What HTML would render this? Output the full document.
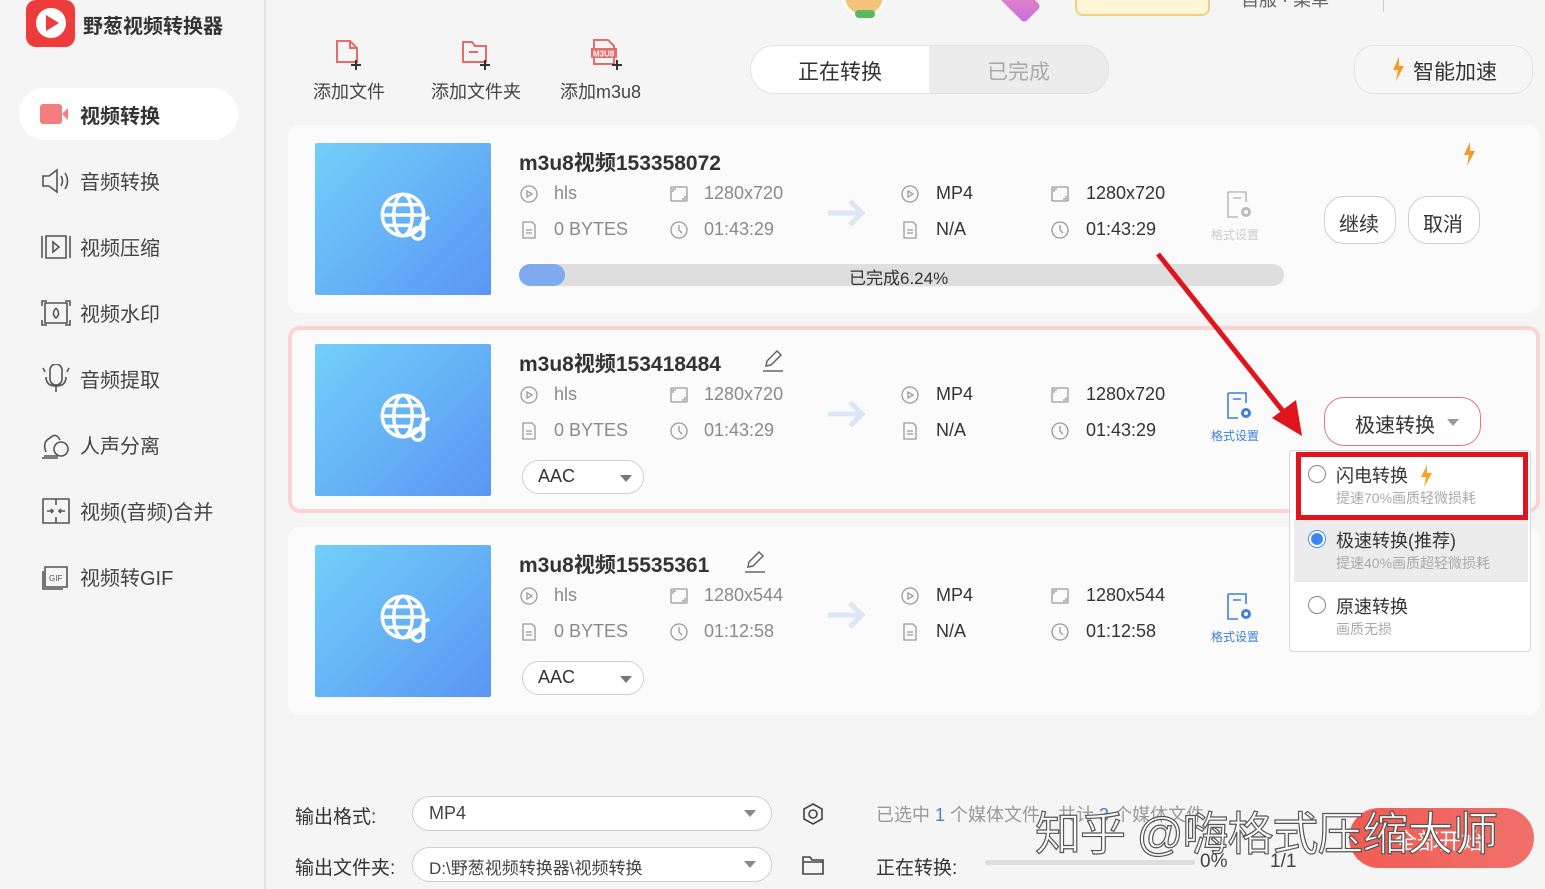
<!DOCTYPE html>
<html><head><meta charset="utf-8">
<style>
*{margin:0;padding:0;box-sizing:border-box}
body{width:1545px;height:889px;overflow:hidden;background:#f5f5f5;font-family:"Liberation Sans","Noto Sans CJK SC",sans-serif;color:#333;position:relative}
.a{position:absolute;white-space:nowrap}
.side{left:0;top:0;width:266px;height:889px;border-right:2px solid #e6e6e6}
.nav{left:80px;font-size:20px;color:#444}
.card{left:288px;width:1252px;height:188px;background:#fbfbfb;border-radius:12px}
.th{width:176px;height:152px;background:linear-gradient(135deg,#72cff9,#5a96f4);border-radius:2px}
.g{color:#8a8a8a;font-size:18px}
.k{color:#333;font-size:18px}
.ti{font-size:21px;font-weight:bold;color:#333}
.pill{border:1.5px solid #cfcfcf;border-radius:20px;background:#fff}
.fs{font-size:12px;color:#3d7fe0;text-align:center}
</style></head><body>

<div class="a" style="left:842px;top:-26px;width:44px;height:44px;border-radius:50%;background:#f5c47a;border:3px solid #fff"></div>
<div class="a" style="left:855px;top:10px;width:20px;height:8px;background:#5cb85c;border-radius:4px"></div>
<div class="a" style="left:1002px;top:-10px;width:36px;height:24px;background:linear-gradient(135deg,#f08fb0,#c86ee6);border-radius:4px;transform:rotate(45deg)"></div>
<div class="a" style="left:1075px;top:-20px;width:135px;height:36px;background:#fff6d8;border:2px solid #f0d080;border-radius:8px"></div>
<div class="a" style="left:1241px;top:-14px;font-size:18px;color:#666">自服 · 菜单</div>
<div class="a" style="left:1383px;top:0;width:1px;height:12px;background:#ccc"></div>

<div class="a side"></div>
<div class="a" style="left:26px;top:0;width:49px;height:47px;background:#ee3b3b;border-radius:10px"></div>
<div class="a" style="left:36px;top:8px;width:30px;height:30px;border-radius:50%;background:#fff"></div>
<div class="a" style="left:46px;top:15px;width:0;height:0;border-left:13px solid #ee3b3b;border-top:8px solid transparent;border-bottom:8px solid transparent"></div>
<div class="a" style="left:83px;top:10px;font-size:20px;font-weight:bold;color:#333">野葱视频转换器</div>
<div class="a" style="left:19px;top:88px;width:219px;height:52px;background:#fff;border-radius:26px"></div>
<div class="a" style="left:40px;top:104px;width:22px;height:20px;background:#f47e7e;border-radius:3px"></div>
<div class="a" style="left:62px;top:108px;width:0;height:0;border-right:6px solid #f47e7e;border-top:6px solid transparent;border-bottom:6px solid transparent"></div>
<div class="a nav" style="top:100px;font-weight:bold;color:#333">视频转换</div>
<div class="a nav" style="top:166px">音频转换</div>
<div class="a nav" style="top:232px">视频压缩</div>
<div class="a nav" style="top:298px">视频水印</div>
<div class="a nav" style="top:364px">音频提取</div>
<div class="a nav" style="top:430px">人声分离</div>
<div class="a nav" style="top:496px">视频(音频)合并</div>
<div class="a nav" style="top:562px">视频转GIF</div>
<svg class="a" style="left:40px;top:166px" width="32" height="30" fill="none" stroke="#555" stroke-width="1.6"><path d="M3 10h6l8-6v22l-8-6H3z M21 10q3 5 0 10 M25 7q5 8 0 16"/></svg>
<svg class="a" style="left:40px;top:232px" width="32" height="30" fill="none" stroke="#555" stroke-width="1.6"><path d="M2 4v22 M6 4h20v22H6z M13 10l6 5-6 5z M30 4v22"/></svg>
<svg class="a" style="left:40px;top:298px" width="32" height="30" fill="none" stroke="#555" stroke-width="1.6"><path d="M2 8V3h5 M25 3h5v5 M30 22v5h-5 M7 27H2v-5 M5 5h22v20H5z M16 10q-5 6 0 10q5-4 0-10"/></svg>
<svg class="a" style="left:40px;top:364px" width="32" height="30" fill="none" stroke="#555" stroke-width="1.6"><path d="M10 6a6 6 0 0 1 12 0v9a6 6 0 0 1-12 0z M6 13q0 9 10 9q10 0 10-9 M16 22v6 M3 4l2 4 M29 4l-2 4"/></svg>
<svg class="a" style="left:40px;top:430px" width="32" height="30" fill="none" stroke="#555" stroke-width="1.6"><path d="M4 26h14 M6 22q-4-10 4-14q6-6 10 2 M2 28h16"/><circle cx="21" cy="19" r="7"/></svg>
<svg class="a" style="left:40px;top:496px" width="32" height="30" fill="none" stroke="#555" stroke-width="1.6"><path d="M3 3h26v24H3z M16 3v6 M16 21v6 M7 15h6 M19 15h6 M11 13l2 2-2 2 M21 13l-2 2 2 2"/></svg>
<svg class="a" style="left:40px;top:562px" width="32" height="30" fill="none" stroke="#555" stroke-width="1.6"><path d="M5 5h22v20H5z M3 9v18h20"/><text x="9" y="19" font-size="8" fill="#555" stroke="none" font-family="Liberation Sans">GIF</text></svg>

<svg class="a" style="left:334px;top:38px" width="32" height="36" fill="none" stroke="#ea6a6a" stroke-width="2"><path d="M3 3h13l7 7v14H3z M16 3v7h7"/><path d="M22 22v10 M17 27h10" stroke="#333"/></svg>
<svg class="a" style="left:460px;top:38px" width="34" height="36" fill="none" stroke="#ea6a6a" stroke-width="2"><path d="M3 4h9l3 4h11v16H3z M9 14h9"/><path d="M25 22v10 M20 27h10" stroke="#333"/></svg>
<svg class="a" style="left:590px;top:36px" width="34" height="38" fill="none" stroke="#ea6a6a" stroke-width="2"><path d="M4 4h14l6 6v18H4z"/><rect x="1" y="12" width="26" height="10" fill="#ea6a6a" stroke="none"/><text x="3" y="20.5" font-size="8" fill="#fff" stroke="none" font-weight="bold" font-family="Liberation Sans">M3U8</text><path d="M27 24v10 M22 29h10" stroke="#333"/></svg>
<div class="a" style="left:313px;top:78px;font-size:18px;color:#444">添加文件</div>
<div class="a" style="left:431px;top:78px;font-size:18px;color:#444">添加文件夹</div>
<div class="a" style="left:560px;top:78px;font-size:18px;color:#444">添加m3u8</div>

<div class="a" style="left:750px;top:45px;width:359px;height:49px;background:#ececec;border:1.5px solid #e2e2e2;border-radius:25px;overflow:hidden">
<div style="position:absolute;left:0;top:0;width:178px;height:49px;background:#fff"></div></div>
<div class="a" style="left:798px;top:56px;font-size:21px;color:#333">正在转换</div>
<div class="a" style="left:987px;top:56px;font-size:21px;color:#aaa">已完成</div>
<div class="a pill" style="left:1354px;top:45px;width:179px;height:49px;background:#f6f6f6;border-color:#e2e2e2"></div>
<svg class="a" style="left:1391px;top:57px" width="14" height="24"><path d="M8 0L2 13h5l-2 11 8-15H8z" fill="#f59a23"/></svg>
<div class="a" style="left:1413px;top:56px;font-size:21px;color:#333">智能加速</div>

<div class="a card" style="top:125px"></div>
<div class="a card" style="top:326px;height:187px;border:4px solid #fbd3d3;background:#fbfbfb"></div>
<div class="a card" style="top:527px"></div>

<div class="a th" style="left:315px;top:143px"></div>
<div class="a ti" style="left:519px;top:147px">m3u8视频153358072</div>
<div class="a" style="left:519px;top:264px;width:765px;height:22px;background:#dedede;border-radius:11px"></div>
<div class="a" style="left:519px;top:264px;width:46px;height:22px;background:#7faaf0;border-radius:11px"></div>
<div class="a" style="left:849px;top:264px;font-size:17px;color:#333">已完成6.24%</div>
<svg class="a" style="left:1462px;top:142px" width="14" height="24"><path d="M8 0L2 13h5l-2 11 8-15H8z" fill="#f59a23"/></svg>
<div class="a pill" style="left:1324px;top:196px;width:72px;height:48px"></div>
<div class="a" style="left:1339px;top:208px;font-size:20px;color:#333">继续</div>
<div class="a pill" style="left:1408px;top:196px;width:72px;height:48px"></div>
<div class="a" style="left:1423px;top:208px;font-size:20px;color:#333">取消</div>

<div class="a th" style="left:315px;top:344px"></div>
<div class="a ti" style="left:519px;top:348px">m3u8视频153418484</div>
<div class="a pill" style="left:522px;top:460px;width:122px;height:34px"></div>
<div class="a" style="left:538px;top:466px;font-size:18px;color:#333">AAC</div>
<div class="a" style="left:620px;top:475px;border-top:7px solid #777;border-left:6px solid transparent;border-right:6px solid transparent"></div>
<div class="a pill" style="left:1324px;top:397px;width:157px;height:49px;border-color:#e07a7a"></div>
<div class="a" style="left:1355px;top:409px;font-size:20px;color:#333">极速转换</div>
<div class="a" style="left:1447px;top:419px;border-top:7px solid #999;border-left:6px solid transparent;border-right:6px solid transparent"></div>

<div class="a th" style="left:315px;top:545px"></div>
<div class="a ti" style="left:519px;top:549px">m3u8视频15535361</div>
<div class="a pill" style="left:522px;top:661px;width:122px;height:34px"></div>
<div class="a" style="left:538px;top:667px;font-size:18px;color:#333">AAC</div>
<div class="a" style="left:620px;top:676px;border-top:7px solid #777;border-left:6px solid transparent;border-right:6px solid transparent"></div>

<svg class="a" style="left:762px;top:349px" width="22" height="24" fill="none" stroke="#666" stroke-width="1.5"><path d="M4 17l1-5L15 2l4 4L9 16z M1 22h20"/></svg>
<svg class="a" style="left:744px;top:550px" width="22" height="24" fill="none" stroke="#666" stroke-width="1.5"><path d="M4 17l1-5L15 2l4 4L9 16z M1 22h20"/></svg>

<div class="a g" style="left:554px;top:183px">hls</div>
<div class="a g" style="left:704px;top:183px">1280x720</div>
<div class="a k" style="left:936px;top:183px">MP4</div>
<div class="a k" style="left:1086px;top:183px">1280x720</div>
<div class="a g" style="left:554px;top:219px">0 BYTES</div>
<div class="a g" style="left:704px;top:219px">01:43:29</div>
<div class="a k" style="left:936px;top:219px">N/A</div>
<div class="a k" style="left:1086px;top:219px">01:43:29</div>
<div class="a g" style="left:554px;top:384px">hls</div>
<div class="a g" style="left:704px;top:384px">1280x720</div>
<div class="a k" style="left:936px;top:384px">MP4</div>
<div class="a k" style="left:1086px;top:384px">1280x720</div>
<div class="a g" style="left:554px;top:420px">0 BYTES</div>
<div class="a g" style="left:704px;top:420px">01:43:29</div>
<div class="a k" style="left:936px;top:420px">N/A</div>
<div class="a k" style="left:1086px;top:420px">01:43:29</div>
<div class="a g" style="left:554px;top:585px">hls</div>
<div class="a g" style="left:704px;top:585px">1280x544</div>
<div class="a k" style="left:936px;top:585px">MP4</div>
<div class="a k" style="left:1086px;top:585px">1280x544</div>
<div class="a g" style="left:554px;top:621px">0 BYTES</div>
<div class="a g" style="left:704px;top:621px">01:12:58</div>
<div class="a k" style="left:936px;top:621px">N/A</div>
<div class="a k" style="left:1086px;top:621px">01:12:58</div>

<svg class="a" style="left:0;top:0" width="1545" height="889" fill="none" stroke="#999" stroke-width="1.3">
<defs>
<g id="disc"><circle cx="9" cy="9" r="8"/><path d="M7 6l5 3-5 3z"/></g>
<g id="res"><rect x="1" y="2" width="16" height="14" rx="1"/><path d="M3 7V4h3 M15 11v3h-3"/></g>
<g id="doc"><path d="M3 1h9l3 3v13H3z M6 9h6 M6 12h6"/></g>
<g id="clk"><circle cx="9" cy="9" r="8"/><path d="M9 4v5l3 3"/></g>
<g id="arr"><path d="M0 16h34 M22 4l12 12-12 12" stroke="#dde6f5" stroke-width="5"/></g>
<g id="globe" stroke="#fff" stroke-width="3"><circle cx="20" cy="20" r="18"/><ellipse cx="20" cy="20" rx="8" ry="18"/><path d="M2 20h36 M5 11h30 M5 29h22"/><circle cx="33" cy="36" r="5"/><path d="M38 36V24l5-2"/></g>
<g id="fmt"><path d="M2 2h18v10 M2 2v25h10 M7 8h8" stroke="#3d7fe0" stroke-width="1.6"/><circle cx="20" cy="22" r="5" fill="#3d7fe0" stroke="none"/><circle cx="20" cy="22" r="2" fill="#fff" stroke="none"/></g>
<g id="fmtg"><path d="M2 2h18v10 M2 2v25h10 M7 8h8" stroke="#bbb" stroke-width="1.6"/><circle cx="20" cy="22" r="5" fill="#bbb" stroke="none"/><circle cx="20" cy="22" r="2" fill="#fff" stroke="none"/></g>
</defs>
<use href="#disc" x="520" y="185"/><use href="#res" x="670" y="185"/><use href="#disc" x="901" y="185"/><use href="#res" x="1051" y="185"/>
<use href="#doc" x="520" y="221"/><use href="#clk" x="670" y="221"/><use href="#doc" x="901" y="221"/><use href="#clk" x="1051" y="221"/>
<use href="#disc" x="520" y="386"/><use href="#res" x="670" y="386"/><use href="#disc" x="901" y="386"/><use href="#res" x="1051" y="386"/>
<use href="#doc" x="520" y="422"/><use href="#clk" x="670" y="422"/><use href="#doc" x="901" y="422"/><use href="#clk" x="1051" y="422"/>
<use href="#disc" x="520" y="587"/><use href="#res" x="670" y="587"/><use href="#disc" x="901" y="587"/><use href="#res" x="1051" y="587"/>
<use href="#doc" x="520" y="623"/><use href="#clk" x="670" y="623"/><use href="#doc" x="901" y="623"/><use href="#clk" x="1051" y="623"/>
<use href="#arr" x="828" y="197"/><use href="#arr" x="828" y="398"/><use href="#arr" x="828" y="599"/>
<g transform="translate(380,192) scale(1.15)" stroke-width="2.6"><use href="#globe"/></g>
<g transform="translate(380,393) scale(1.15)"><use href="#globe"/></g>
<g transform="translate(380,594) scale(1.15)"><use href="#globe"/></g>
<use href="#fmtg" x="1226" y="190"/><use href="#fmt" x="1226" y="391"/><use href="#fmt" x="1226" y="592"/>
</svg>
<div class="a" style="left:1211px;top:226px;font-size:12px;color:#ccc">格式设置</div>
<div class="a fs" style="left:1211px;top:427px">格式设置</div>
<div class="a fs" style="left:1211px;top:628px">格式设置</div>

<div class="a" style="left:1289px;top:450px;width:242px;height:202px;background:#fff;border:1.5px solid #d8d8d8;border-radius:4px"></div>
<div class="a" style="left:1294px;top:519px;width:234px;height:63px;background:#ececec"></div>
<div class="a" style="left:1296px;top:452px;width:232px;height:68px;border:5px solid #e0141c"></div>
<div class="a" style="left:1308px;top:465px;width:18px;height:18px;border:1.5px solid #888;border-radius:50%"></div>
<div class="a" style="left:1336px;top:462px;font-size:18px;color:#333">闪电转换</div>
<svg class="a" style="left:1419px;top:465px" width="14" height="22"><path d="M8 0L2 12h5l-2 10 8-14H8z" fill="#f5a623"/></svg>
<div class="a" style="left:1336px;top:488px;font-size:14px;color:#aaa">提速70%画质轻微损耗</div>
<div class="a" style="left:1308px;top:530px;width:18px;height:18px;border:1.5px solid #4a8ff0;border-radius:50%;background:radial-gradient(#3d86f0 50%,#fff 55%)"></div>
<div class="a" style="left:1336px;top:527px;font-size:18px;color:#333">极速转换(推荐)</div>
<div class="a" style="left:1336px;top:553px;font-size:14px;color:#aaa">提速40%画质超轻微损耗</div>
<div class="a" style="left:1308px;top:596px;width:18px;height:18px;border:1.5px solid #888;border-radius:50%"></div>
<div class="a" style="left:1336px;top:593px;font-size:18px;color:#333">原速转换</div>
<div class="a" style="left:1336px;top:619px;font-size:14px;color:#aaa">画质无损</div>

<svg class="a" style="left:1140px;top:240px" width="180" height="210"><path d="M18 14L150 180" stroke="#e0141c" stroke-width="5"/><path d="M162 196L132 178L156 160z" fill="#e0141c"/></svg>

<div class="a" style="left:295px;top:802px;font-size:19px;color:#333">输出格式:</div>
<div class="a pill" style="left:412px;top:796px;width:360px;height:35px"></div>
<div class="a" style="left:429px;top:803px;font-size:18px;color:#444">MP4</div>
<div class="a" style="left:744px;top:810px;border-top:7px solid #888;border-left:6px solid transparent;border-right:6px solid transparent"></div>
<div class="a" style="left:295px;top:853px;font-size:19px;color:#333">输出文件夹:</div>
<div class="a pill" style="left:412px;top:847px;width:360px;height:35px"></div>
<div class="a" style="left:429px;top:854px;font-size:17px;color:#444">D:\野葱视频转换器\视频转换</div>
<div class="a" style="left:744px;top:861px;border-top:7px solid #888;border-left:6px solid transparent;border-right:6px solid transparent"></div>
<svg class="a" style="left:801px;top:802px" width="24" height="24" fill="none" stroke="#444" stroke-width="1.6"><path d="M12 2l9 5v10l-9 5-9-5V7z"/><circle cx="12" cy="12" r="4"/></svg>
<svg class="a" style="left:801px;top:854px" width="24" height="22" fill="none" stroke="#444" stroke-width="1.6"><path d="M2 3h7l2 3h11v14H2z M2 8h20"/></svg>
<div class="a" style="left:876px;top:801px;font-size:18px;color:#999">已选中 <span style="color:#3d7fe0">1</span> 个媒体文件，共计 <span style="color:#3d7fe0">3</span> 个媒体文件</div>
<div class="a" style="left:876px;top:853px;font-size:19px;color:#333">正在转换:</div>
<div class="a" style="left:985px;top:860px;width:210px;height:5px;background:#ddd;border-radius:3px"></div>
<div class="a" style="left:1200px;top:851px;font-size:19px;color:#444">0%</div>
<div class="a" style="left:1270px;top:851px;font-size:19px;color:#444">1/1</div>
<div class="a" style="left:1349px;top:808px;width:185px;height:60px;background:linear-gradient(90deg,#f25b52,#f0716a);border-radius:30px"></div>
<div class="a" style="left:1395px;top:824px;font-size:22px;color:#fff">全部开始</div>
<div class="a" style="left:1035px;top:798px;font-size:46px;color:#fff;-webkit-text-stroke:1.2px #555;letter-spacing:-1px">知乎 @嗨格式压缩大师</div>
</body></html>
